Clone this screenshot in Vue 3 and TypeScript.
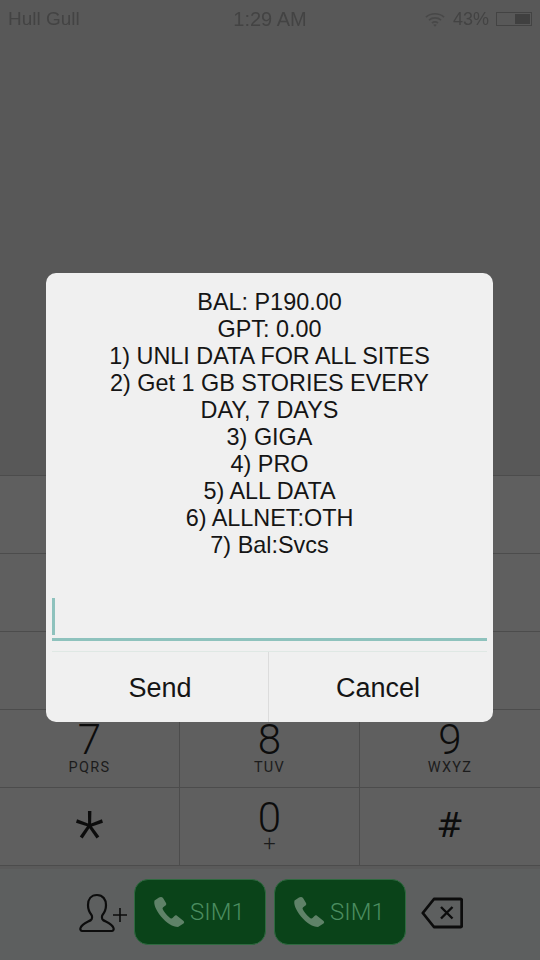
<script setup lang="ts">
interface Key { digit: string; letters: string; kind?: string }
const blankRows: number[] = [1, 2, 3]
const keys: Key[] = [
  { digit: '7', letters: 'PQRS' }, { digit: '8', letters: 'TUV' }, { digit: '9', letters: 'WXYZ' },
  { digit: '*', letters: '', kind: 'star' }, { digit: '0', letters: '+', kind: 'zero' }, { digit: '#', letters: '', kind: 'hash' },
]
const lines: string[] = [
  'BAL: P190.00', 'GPT: 0.00', '1) UNLI DATA FOR ALL SITES', '2) Get 1 GB STORIES EVERY',
  'DAY, 7 DAYS', '3) GIGA', '4) PRO', '5) ALL DATA', '6) ALLNET:OTH', '7) Bal:Svcs',
]
const sims: string[] = ['SIM1', 'SIM1']
</script>

<template>
  <div class="screen">
    <header class="status">
      <span class="carrier">Hull Gull</span>
      <span class="time">1:29 AM</span>
      <div class="status-right">
        <svg class="wifi" viewBox="0 0 20 15" width="20" height="15" fill="none" stroke="#484848" stroke-width="1.7">
          <path d="M1 5.2C6 .6 14 .6 19 5.2" />
          <path d="M4 8.2c3.4-3 8.6-3 12 0" />
          <path d="M7 11c1.800-1.400 4.200-1.400 6 0" />
          <path d="M10 14.800l-1.800-2c1-.8 2.600-.8 3.600 0z" fill="#484848" stroke="none" />
        </svg>
        <span class="pct">43%</span>
        <div class="battery"><div class="battery-fill"></div></div>
      </div>
    </header>

    <div class="spacer"></div>

    <section class="keypad">
      <div v-for="r in blankRows" :key="r" class="blank-row"></div>
      <div v-for="k in keys" :key="k.digit" class="key" :class="k.kind">
        <span class="digit">{{ k.digit }}</span>
        <span v-if="k.letters" class="letters">{{ k.letters }}</span>
      </div>
    </section>

    <footer class="callbar">
      <svg class="add" viewBox="0 0 48 40" width="48" height="40" fill="none" stroke="#0c0c0c" stroke-width="2.200" stroke-linejoin="round" stroke-linecap="round">
        <path d="M18 2c-6 0-9 4.500-9 10 0 4 1.500 7.500 3.500 10 .8 1 .8 4-.5 5-2.500 1.800-9 3.500-10.500 8-.5 1.500.2 3 1.800 3h29.400c1.600 0 2.300-1.500 1.800-3-1.500-4.500-8-6.200-10.500-8-1.300-1-1.300-4-.5-5 2-2.500 3.500-6 3.500-10 0-5.500-3-10-9-10z" />
        <path d="M34 22h14M41 15v14" stroke-width="1.600" stroke-linecap="butt" />
      </svg>
      <button v-for="(s, i) in sims" :key="i" class="call" type="button">
        <svg class="phone" viewBox="0 0 32 32" width="32" height="32">
          <path d="M6 1.500 1.500 4.500C.5 8 2.500 13.500 8 20.500c5.500 6.500 12 10.500 17 10.500l5.500-3.500c1-1 .8-2-.2-2.800l-6.300-5c-1-.7-1.800-.6-2.500.2l-2 2.200c-.6.6-1.300.6-2 .1-2.500-1.700-6.300-6-7.700-9-.4-.8-.2-1.500.4-2l2.300-1.700c.9-.7 1-1.500.5-2.500L10 2c-.8-1.200-2.500-1.300-4-.5z" fill="#5f8268" />
        </svg>
        <span class="sim">{{ s }}</span>
      </button>
      <svg class="back" viewBox="0 0 42 32" width="42" height="32" fill="none" stroke="#0c0c0c" stroke-width="2.800" stroke-linejoin="round">
        <path d="M13 2h26.500c.8 0 1.200.5 1.200 1.200v25.600c0 .7-.4 1.200-1.200 1.200H13L1.800 16z" />
        <path d="M20 10l11.500 11.500M31.500 10 20 21.500" stroke-width="2.400" />
      </svg>
    </footer>

    <div class="overlay">
      <div class="dialog">
        <div class="message">
          <div v-for="(l, i) in lines" :key="i">{{ l }}</div>
        </div>
        <div class="field"><span class="cursor"></span></div>
        <div class="actions">
          <div class="action send">Send</div>
          <div class="action">Cancel</div>
        </div>
      </div>
    </div>
  </div>
</template>

<style>
html, body { margin: 0; background: #585858; }
</style>

<style scoped>
.screen {
  position: relative;
  width: 540px;
  height: 960px;
  display: flex;
  flex-direction: column;
  overflow: hidden;
  background: #585858;
  font-family: "Liberation Sans", Arial, sans-serif;
  color: #0c0c0c;
}
.status {
  height: 38px;
  display: grid;
  grid-template-columns: 1fr auto 1fr;
  align-items: center;
  padding: 0 8px;
  color: #434343;
  flex: none;
}
.carrier { font-size: 19px; filter: blur(0.6px); }
.time { font-size: 20px; filter: blur(0.5px); }
.status-right { display: flex; align-items: center; justify-content: flex-end; gap: 8px; }
.wifi { filter: blur(0.4px); }
.pct { font-size: 18px; filter: blur(0.6px); margin-right: -1px; }
.battery {
  width: 36px;
  height: 14px;
  border: 1px solid #434343;
  display: flex;
  justify-content: flex-end;
  box-sizing: border-box;
  padding: 1px;
}
.battery-fill { width: 15px; background: #404040; }
.spacer { flex: 1; }
.keypad {
  flex: none;
  display: grid;
  grid-template-columns: 180px 180px 180px;
  grid-auto-rows: 78px;
  background: #5f5f5f;
  border-top: 1px solid #4c4c4c;
}
.blank-row { grid-column: 1 / -1; border-bottom: 1px solid #4c4c4c; }
.key {
  box-sizing: border-box;
  border-bottom: 1px solid #4c4c4c;
  border-right: 1px solid #4c4c4c;
  display: flex;
  flex-direction: column;
  align-items: center;
  padding-top: 10px;
  font-family: Roboto, "Liberation Sans", sans-serif;
}
.key:nth-child(3n) { border-right: none; }
.digit { font-size: 42px; font-weight: 300; line-height: 40px; height: 40px; }
.letters { font-size: 14.500px; font-weight: 400; color: #1c1c1c; line-height: 16px; letter-spacing: 1.300px; }
.zero .letters { font-size: 22px; font-weight: 300; letter-spacing: 0; line-height: 12px; }
.star .digit { font-size: 68px; font-weight: 300; line-height: 78px; height: 60px; }
.hash .digit { font-family: "DejaVu Sans", sans-serif; font-size: 33px; font-weight: 400; line-height: 56px; height: 56px; }
.callbar {
  flex: none;
  height: 94px;
  box-sizing: border-box;
  padding: 13px 0 0 79px;
  display: flex;
  align-items: flex-start;
  gap: 8px;
  background: #5d5f5f;
  box-shadow: inset 0 3px 0 #5a5a5a;
}
.add { margin-top: 14px; margin-right: -1px; flex: none; }
.call {
  box-sizing: border-box;
  width: 132px;
  height: 66px;
  border-radius: 14px;
  background: #0a4319;
  border: 1px solid #2f6a40;
  display: flex;
  align-items: center;
  padding: 0 0 0 18px;
  gap: 5px;
  font-family: Roboto, "Liberation Sans", sans-serif;
  flex: none;
}
.sim { font-size: 24px; font-weight: 300; color: #4a8d60; }
.back { margin: 18px 0 0 7px; flex: none; }
.overlay {
  position: absolute;
  top: 273px;
  left: 46px;
}
.dialog {
  width: 447px;
  height: 449px;
  border-radius: 10px;
  background: #f0f0f0;
  display: flex;
  flex-direction: column;
}
.message {
  flex: 1;
  padding-top: 16px;
  text-align: center;
  font-size: 23.400px;
  line-height: 27px;
  color: #151515;
}
.field {
  height: 43px;
  box-sizing: border-box;
  margin: 0 6px;
  border-bottom: 3px solid #8ec2bd;
  flex: none;
}
.cursor { display: block; width: 3px; height: 37px; background: #8ec2bd; }
.actions {
  flex: none;
  height: 70px;
  margin: 10px 6px 0;
  display: grid;
  grid-template-columns: 217px 218px;
  border-top: 1px solid #dfe8e4;
}
.action {
  display: flex;
  align-items: center;
  justify-content: center;
  font-size: 27px;
  color: #151515;
  padding-top: 2px;
}
.send { border-right: 1px solid #dcdcdc; }
</style>
